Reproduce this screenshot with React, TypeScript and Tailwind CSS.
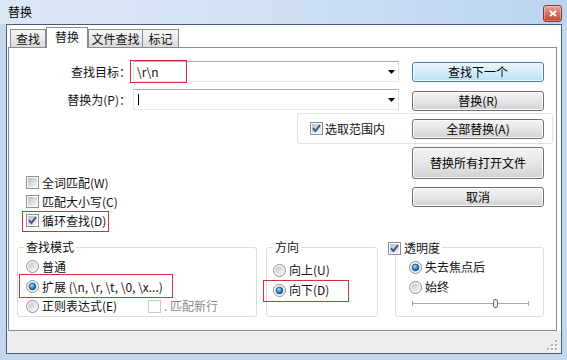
import React from "react";

function CheckBox({ checked = false, disabled = false }: { checked?: boolean; disabled?: boolean }) {
  return (
    <svg width="13" height="13" viewBox="0 0 13 13" className="block shrink-0">
      <defs>
        <linearGradient id="cbg" x1="0" y1="0" x2="1" y2="1">
          <stop offset="0" stopColor="#b9bec4" />
          <stop offset="1" stopColor="#f7f7f7" />
        </linearGradient>
      </defs>
      <rect x="0.5" y="0.5" width="12" height="12" fill="#fdfdfd" stroke={disabled ? "#c9c9c9" : "#8e8f8f"} />
      {!disabled && <rect x="2" y="2" width="9" height="9" fill="url(#cbg)" />}
      {checked && <path d="M3 6.2 L5.4 9 L10 3.2" fill="none" stroke="#3d5389" strokeWidth="1.9" />}
    </svg>
  );
}

function Radio({ checked = false }: { checked?: boolean }) {
  return (
    <svg width="13" height="13" viewBox="0 0 13 13" className="block shrink-0">
      <defs>
        <linearGradient id="rbg" x1="0" y1="0" x2="1" y2="1">
          <stop offset="0" stopColor="#c2c6cb" />
          <stop offset="1" stopColor="#f6f6f6" />
        </linearGradient>
        <radialGradient id="rdot" cx="0.4" cy="0.35" r="0.75">
          <stop offset="0" stopColor="#b5e2fb" />
          <stop offset="0.45" stopColor="#3b8fd0" />
          <stop offset="1" stopColor="#16426b" />
        </radialGradient>
      </defs>
      <circle cx="6.5" cy="6.5" r="6" fill="#f6f6f6" stroke="#8e8f8f" />
      <circle cx="6.5" cy="6.5" r="4.3" fill="url(#rbg)" />
      {checked && <circle cx="6.5" cy="6.5" r="3.4" fill="url(#rdot)" stroke="#1b4a74" strokeWidth="0.6" />}
    </svg>
  );
}

function Btn({ children, primary = false, className = "" }: { children: React.ReactNode; primary?: boolean; className?: string }) {
  const base = primary
    ? "border-[#3c7fb1] bg-linear-to-b from-[#eaf6fd] via-[#d4edfb] to-[#b9e1f6] shadow-[inset_0_0_0_1px_#f2faff]"
    : "border-[#707070] bg-linear-to-b from-[#f4f4f4] via-[#e6e6e6] to-[#d2d2d2] shadow-[inset_0_0_0_1px_#fbfbfb]";
  return (
    <div className={base + " flex shrink-0 items-center justify-center rounded-[3px] border text-[12px] leading-[14px] text-black " + className}>
      {children}
    </div>
  );
}

function Arrow() {
  return (
    <svg width="7" height="4" viewBox="0 0 7 4" className="ml-auto mr-[3px] block shrink-0">
      <path d="M0 0 H7 L3.5 4 Z" fill="#000" />
    </svg>
  );
}

export default function App() {
  return (
    <div className="flex h-[360px] w-[567px] flex-col overflow-hidden bg-[#c3d7ee] font-['Microsoft_YaHei','Noto_Sans_CJK_SC',sans-serif] text-[12px] leading-[14px] text-[#111]">
      {/* title bar */}
      <div className="flex h-[24px] shrink-0 items-start justify-between bg-linear-to-r from-[#dce7f5] via-[#cfe0f4] to-[#bad4f0] pl-[8px] pr-[5px]">
        <span className="mt-[5px] text-[12px] leading-[14px] text-black">替换</span>
        <div className="mt-[5px] flex h-[17px] w-[19px] items-center justify-center rounded-[3px] border border-[#80392c] bg-linear-to-b from-[#e9a898] via-[#d5705b] to-[#c1452f] shadow-[inset_0_0_0_1px_rgba(255,255,255,0.35)]">
          <svg width="8" height="7" viewBox="0 0 8 7" className="block">
            <path d="M1 1 L7 6 M7 1 L1 6" stroke="#fff" strokeWidth="1.8" />
          </svg>
        </div>
      </div>

      {/* client area */}
      <div className="mb-[6px] ml-[6px] mr-[5px] flex flex-1 flex-col border border-[#4b5b70] bg-white">
        {/* tabs */}
        <div className="flex h-[22px] shrink-0 items-end pl-[3px]">
          <div className="flex h-[18px] w-[36px] items-center justify-center border-x border-t border-[#898c95] bg-linear-to-b from-[#f7f7f7] to-[#dadada] pt-[1px]">查找</div>
          <div className="relative z-10 -mb-[1px] flex h-[21px] w-[42px] items-start justify-center border-x border-t border-[#898c95] bg-white pt-[2px]">替换</div>
          <div className="flex h-[18px] w-[55px] items-center justify-center border-x border-t border-[#898c95] bg-linear-to-b from-[#f7f7f7] to-[#dadada] pt-[1px]">文件查找</div>
          <div className="flex h-[18px] w-[36px] items-center justify-center border-r border-t border-[#898c95] bg-linear-to-b from-[#f7f7f7] to-[#dadada] pt-[1px]">标记</div>
        </div>

        {/* panel */}
        <div className="relative z-0 ml-[1px] mr-[4px] flex h-[284px] shrink-0 flex-col border border-[#898c95] bg-white">
          {/* row A */}
          <div className="mt-[13px] flex h-[21px] items-start">
            <div className="flex h-[21px] w-[124px] items-center justify-end pr-[2px]">查找目标：</div>
            <div className="relative flex h-[21px] w-[266px] items-center border border-[#abadb3] border-b-[#e3e9ef] border-l-[#e2e3ea] border-r-[#dbdfe6] bg-white pl-[3px]">
              <span>{"\\r\\n"}</span>
              <Arrow />
              <div className="pointer-events-none absolute -left-[4px] -top-[2px] h-[23px] w-[57px] border border-[#d3303a]" />
            </div>
            <Btn primary className="ml-[13px] mt-[1px] h-[20px] w-[132px]">查找下一个</Btn>
          </div>

          {/* row B */}
          <div className="mt-[7px] flex h-[22px] items-start">
            <div className="flex h-[21px] w-[124px] items-center justify-end pr-[2px]">替换为(P)：</div>
            <div className="flex h-[21px] w-[266px] items-center border border-[#abadb3] border-b-[#e3e9ef] border-l-[#e2e3ea] border-r-[#dbdfe6] bg-white pl-[4px]">
              <span className="block h-[11px] w-[1px] bg-black" />
              <Arrow />
            </div>
            <Btn className="ml-[13px] mt-[2px] h-[20px] w-[132px]">替换(R)</Btn>
          </div>

          {/* row C */}
          <div className="ml-[288px] mt-[2px] flex h-[31px] w-[256px] items-center justify-between rounded-[3px] border border-[#e0e3e6] pl-[12px] pr-[8px]">
            <div className="flex items-center gap-[2px]">
              <CheckBox checked />
              <span>选取范围内</span>
            </div>
            <Btn className="h-[20px] w-[132px]">全部替换(A)</Btn>
          </div>

          {/* row D */}
          <div className="mt-[3px] flex">
            <div className="ml-[17px] flex flex-col pt-[26px]">
              <div className="flex h-[19px] items-center gap-[3px]">
                <CheckBox />
                <span>全词匹配(W)</span>
              </div>
              <div className="flex h-[19px] items-center gap-[3px]">
                <CheckBox />
                <span>匹配大小写(C)</span>
              </div>
              <div className="relative flex h-[19px] items-center gap-[3px]">
                <CheckBox checked />
                <span>循环查找(D)</span>
                <div className="pointer-events-none absolute -left-[4px] top-0 h-[21px] w-[87px] border border-[#d3303a]" />
              </div>
            </div>
            <div className="ml-auto mr-[12px] flex flex-col">
              <Btn className="h-[32px] w-[132px]">替换所有打开文件</Btn>
              <Btn className="mt-[8px] h-[20px] w-[132px]">取消</Btn>
            </div>
          </div>

          {/* row E */}
          <div className="ml-[8px] mt-[17px] flex items-start">
            {/* 查找模式 */}
            <div className="relative flex h-[70px] w-[240px] flex-col rounded-[3px] border border-[#d5dfe5] pl-[8px] pt-[9px]">
              <span className="absolute -top-[8px] left-[6px] bg-white px-[2px] leading-[14px]">查找模式</span>
              <div className="flex h-[20px] items-center gap-[3px]">
                <Radio />
                <span>普通</span>
              </div>
              <div className="flex h-[20px] items-center gap-[3px]">
                <Radio checked />
                <span>扩展 (\n, \r, \t, \0, \x...)</span>
              </div>
              <div className="flex h-[20px] items-center">
                <Radio />
                <span className="ml-[3px] w-[106px]">正则表达式(E)</span>
                <CheckBox disabled />
                <span className="ml-[3px] text-[#8a8a8a]">. 匹配新行</span>
              </div>
              <div className="pointer-events-none absolute left-[1px] top-[26px] h-[24px] w-[154px] border border-[#d3303a]" />
            </div>

            {/* 方向 */}
            <div className="relative ml-[9px] flex h-[70px] w-[112px] flex-col rounded-[3px] border border-[#d5dfe5] pl-[6px] pt-[12px]">
              <span className="absolute -top-[8px] left-[6px] bg-white px-[2px] leading-[14px]">方向</span>
              <div className="flex h-[20px] items-center gap-[3px]">
                <Radio />
                <span>向上(U)</span>
              </div>
              <div className="flex h-[20px] items-center gap-[3px]">
                <Radio checked />
                <span>向下(D)</span>
              </div>
              <div className="pointer-events-none absolute -left-[4px] top-[32px] h-[22px] w-[86px] border border-[#d3303a]" />
            </div>

            {/* 透明度 */}
            <div className="relative ml-[17px] flex h-[70px] w-[149px] flex-col rounded-[3px] border border-[#d5dfe5] pl-[13px] pt-[9px]">
              <div className="absolute -left-[8px] -top-[7px] flex items-center gap-[3px] bg-white pr-[2px]">
                <CheckBox checked />
                <span className="leading-[14px]">透明度</span>
              </div>
              <div className="flex h-[20px] items-center gap-[3px]">
                <Radio checked />
                <span>失去焦点后</span>
              </div>
              <div className="flex h-[20px] items-center gap-[3px]">
                <Radio />
                <span>始终</span>
              </div>
              <div className="relative ml-[3px] mt-[1px] flex h-[11px] w-[117px] items-center">
                <div className="h-[1px] w-full bg-[#a8a8a8]" />
                <div className="absolute left-0 top-[3px] h-[5px] w-[1px] bg-[#a8a8a8]" />
                <div className="absolute right-0 top-[3px] h-[5px] w-[1px] bg-[#a8a8a8]" />
                <div className="absolute left-[81px] top-[1px] h-[9px] w-[5px] rounded-[2px] border border-[#6f6f6f] bg-[#ececec]" />
              </div>
            </div>
          </div>
        </div>

        {/* bottom strip */}
        <div className="flex flex-1 items-end justify-end bg-[#ededed] pb-[2px] pr-[3px]">
          <svg width="12" height="12" viewBox="0 0 12 12" className="block">
            {[
              [9, 1],
              [9, 5],
              [5, 5],
              [9, 9],
              [5, 9],
              [1, 9],
            ].map(([x, y], i) => (
              <g key={i}>
                <rect x={x + 1} y={y + 1} width="2" height="2" fill="#ffffff" />
                <rect x={x} y={y} width="2" height="2" fill="#a8b0b8" />
              </g>
            ))}
          </svg>
        </div>
      </div>
    </div>
  );
}
